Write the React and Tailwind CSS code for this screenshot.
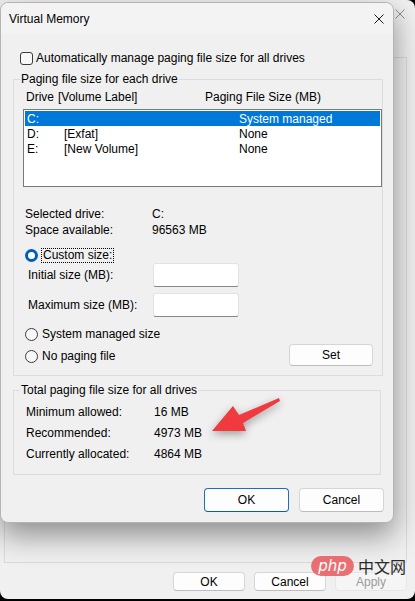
import React from 'react';

const DRIVES = [
  { drive: 'C:', label: '', size: 'System managed', selected: true },
  { drive: 'D:', label: '[Exfat]', size: 'None' },
  { drive: 'E:', label: '[New Volume]', size: 'None' },
];

const TOTALS = [
  ['Minimum allowed:', '16 MB'],
  ['Recommended:', '4973 MB'],
  ['Currently allocated:', '4864 MB'],
];

const CloseIcon = ({ color = '#1a1a1a', size = 10 }) => (
  <svg width={size} height={size} viewBox="0 0 10 10">
    <path d="M0.5 0.5 L9.5 9.5 M9.5 0.5 L0.5 9.5" stroke={color} strokeWidth="1" fill="none" />
  </svg>
);

const Radio = ({ checked }) =>
  checked ? (
    <span className="w-[13px] h-[13px] rounded-full border-[3.5px] border-[#005fb8] bg-white shrink-0" />
  ) : (
    <span className="w-[13px] h-[13px] rounded-full border border-[#3a3a3a] bg-[#f7f7f7] shrink-0" />
  );

const Button = ({ children, primary, className = '' }) => (
  <div
    className={
      'flex items-center justify-center rounded-[4px] bg-[#fdfdfd] border ' +
      (primary ? 'border-[#1a6fc4] border-b-[#0b5cad] ' : 'border-[#d6d6d6] border-b-[#bdbdbd] ') +
      className
    }
  >
    {children}
  </div>
);

const App = () => {
  return (
    <div className="relative w-[415px] h-[601px] bg-black overflow-hidden text-[12px] text-black font-['Liberation_Sans',Arial,sans-serif]">
      {/* background window (Performance Options) */}
      <div className="h-[599px] bg-[#f0f0f0] rounded-tr-[8px] rounded-b-[8px] flex flex-col">
        <div className="h-[57px] flex justify-end pr-[10px] pt-[9px]">
          <CloseIcon color="#8c8c8c" />
        </div>
        <div className="ml-[4px] mr-[8px] h-[506px] border border-[#dadada]" />
        <div className="flex justify-end gap-[9px] pr-[8px] mt-[9px]">
          <Button className="w-[72px] h-[19px]">OK</Button>
          <Button className="w-[72px] h-[19px]">Cancel</Button>
          <div className="w-[72px] h-[19px] flex items-center justify-center rounded-[4px] bg-[#f5f5f5] border border-[#e6e6e6] text-[#9a9a9a]">
            Apply
          </div>
        </div>
      </div>

      {/* Virtual Memory dialog */}
      <div className="absolute left-0 top-[2px] w-[394px] h-[521px] bg-[#f0f0f0] rounded-[8px] border border-[#b4b4b4] shadow-[0_12px_30px_rgba(0,0,0,0.42)] flex flex-col">
        <div className="h-[31px] flex items-center justify-between pl-[8px] pr-[9px] bg-[#f3f3f3] rounded-t-[8px]">
          <span>Virtual Memory</span>
          <CloseIcon />
        </div>

        <div className="mt-[16px] h-[16px] flex items-center pl-[19px]">
          <span className="w-[13px] h-[13px] rounded-[3px] border border-[#3a3a3a] bg-[#f7f7f7]" />
          <span className="ml-[3px]">Automatically manage paging file size for all drives</span>
        </div>

        <fieldset className="mt-[5px] mx-[12px] border border-[#dcdcdc] pb-[9px]">
          <legend className="ml-[6px] px-[1px] leading-[16px]">Paging file size for each drive</legend>
          <div className="mt-[2px] h-[16px] flex items-center pl-[12px]">
            <span className="w-[32px]">Drive</span>
            <span className="w-[147px]">[Volume Label]</span>
            <span>Paging File Size (MB)</span>
          </div>
          <div className="mt-[4px] ml-[9px] w-[359px] h-[78px] border border-[#7a7a7a] bg-white p-[1px]">
            {DRIVES.map((d) => (
              <div
                key={d.drive}
                className={
                  'h-[15px] flex items-center pl-[2px] ' + (d.selected ? 'bg-[#0078d7] text-white' : '')
                }
              >
                <span className="w-[37px]">{d.drive}</span>
                <span className="w-[175px]">{d.label}</span>
                <span>{d.size}</span>
              </div>
            ))}
          </div>

          <div className="mt-[19px] pl-[11px]">
            <div className="h-[16px] flex items-center">
              <span className="w-[127px]">Selected drive:</span>
              <span>C:</span>
            </div>
            <div className="h-[16px] flex items-center">
              <span className="w-[127px]">Space available:</span>
              <span>96563 MB</span>
            </div>
          </div>

          <div className="mt-[9px] h-[16px] flex items-center pl-[11px]">
            <Radio checked />
            <span className="ml-[3px] px-[1px] h-[15px] flex items-center border border-dotted border-black">
              Custom size:
            </span>
          </div>
          <div className="h-[24px] flex items-center pl-[14px]">
            <span className="w-[125px]">Initial size (MB):</span>
            <div className="w-[86px] h-[24px] bg-white border border-[#e2e2e2] border-b-[#868686] rounded-[3px]" />
          </div>
          <div className="mt-[6px] h-[24px] flex items-center pl-[14px]">
            <span className="w-[125px]">Maximum size (MB):</span>
            <div className="w-[86px] h-[24px] bg-white border border-[#e2e2e2] border-b-[#868686] rounded-[3px]" />
          </div>

          <div className="mt-[9px] flex items-end justify-between pl-[11px] pr-[9px]">
            <div className="flex flex-col gap-[6px] pb-[2px]">
              <div className="h-[16px] flex items-center">
                <Radio />
                <span className="ml-[4px]">System managed size</span>
              </div>
              <div className="h-[16px] flex items-center">
                <Radio />
                <span className="ml-[4px]">No paging file</span>
              </div>
            </div>
            <Button className="w-[84px] h-[22px]">Set</Button>
          </div>
        </fieldset>

        <fieldset className="mt-[6px] mx-[12px] border border-[#dcdcdc] pb-[10px]">
          <legend className="ml-[6px] px-[1px] leading-[16px]">Total paging file size for all drives</legend>
          <div className="mt-[3px] pl-[12px]">
            {TOTALS.map(([label, value]) => (
              <div key={label} className="h-[21px] flex items-center">
                <span className="w-[128px]">{label}</span>
                <span>{value}</span>
              </div>
            ))}
          </div>
        </fieldset>

        <div className="mt-[13px] flex justify-end gap-[10px] pr-[9px]">
          <Button primary className="w-[85px] h-[24px]">OK</Button>
          <Button className="w-[85px] h-[24px]">Cancel</Button>
        </div>
      </div>

      {/* red annotation arrow */}
      <svg
        className="absolute left-0 top-0 pointer-events-none drop-shadow-[0_3px_4px_rgba(0,0,0,0.35)]"
        width="415"
        height="601"
        viewBox="0 0 415 601"
      >
        <polygon
          points="212,431 233,406 239,415 279,398 280,401 243,423 246,431"
          fill="#f03a3e"
        />
      </svg>

      {/* watermark */}
      <div className="absolute left-[311px] top-[556px] flex items-center pointer-events-none">
        <div className="w-[43px] h-[20px] rounded-full bg-[#e9585c]/85 flex items-center justify-center">
          <span className="italic text-white text-[15px] leading-none font-['DejaVu_Sans',sans-serif]">php</span>
        </div>
        <span className="ml-[4px] text-[16px] leading-none text-[#2a2a2a] font-['Noto_Sans_CJK_SC',sans-serif]">
          中文网
        </span>
      </div>
    </div>
  );
};

export default App;
